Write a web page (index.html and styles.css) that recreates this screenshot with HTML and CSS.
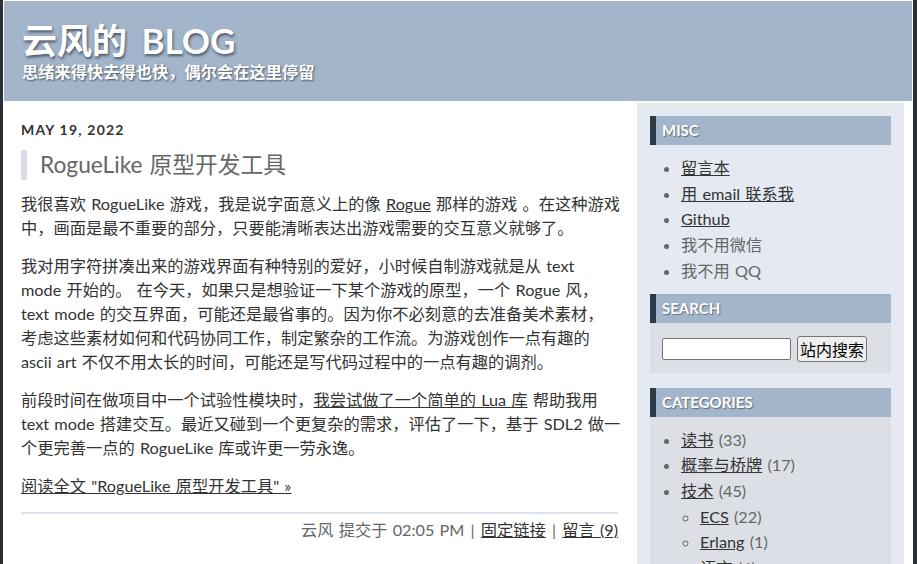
FILE: index.html
```html
<!DOCTYPE html>
<html lang="zh-CN">
<head>
<meta charset="utf-8">
<title>云风的 BLOG</title>
<link rel="stylesheet" href="styles.css">
</head>
<body>
<div class="wrapper">
  <header class="banner">
    <h1 class="site-title">云风的 BLOG</h1>
    <div class="site-desc">思绪来得快去得也快，偶尔会在这里停留</div>
  </header>
  <div class="columns">
    <main class="main">
      <h2 class="date">May 19, 2022</h2>
      <h3 class="entry-title">RogueLike 原型开发工具</h3>
      <div class="entry-body">
        <p>我很喜欢 RogueLike 游戏，我是说字面意义上的像 <a href="#">Rogue</a> 那样的游戏 。在这种游戏<br>中，画面是最不重要的部分，只要能清晰表达出游戏需要的交互意义就够了。</p>
        <p>我对用字符拼凑出来的游戏界面有种特别的爱好，小时候自制游戏就是从 text<br>mode 开始的。 在今天，如果只是想验证一下某个游戏的原型，一个 Rogue 风，<br>text mode 的交互界面，可能还是最省事的。因为你不必刻意的去准备美术素材，<br>考虑这些素材如何和代码协同工作，制定繁杂的工作流。为游戏创作一点有趣的<br>ascii art 不仅不用太长的时间，可能还是写代码过程中的一点有趣的调剂。</p>
        <p>前段时间在做项目中一个试验性模块时，<a href="#">我尝试做了一个简单的 Lua 库</a> 帮助我用<br>text mode 搭建交互。最近又碰到一个更复杂的需求，评估了一下，基于 SDL2 做一<br>个更完善一点的 RogueLike 库或许更一劳永逸。</p>
        <p><a href="#">阅读全文 "RogueLike 原型开发工具" »</a></p>
      </div>
      <div class="entry-footer">云风 提交于 02:05 PM <span class="sep">|</span> <a href="#">固定链接</a> <span class="sep">|</span> <a href="#">留言 (9)</a></div>
    </main>
    <aside class="sidebar">
      <section class="widget widget-misc">
        <h2 class="widget-title">Misc</h2>
        <ul class="widget-list">
          <li><a href="#">留言本</a></li>
          <li><a href="#">用 email 联系我</a></li>
          <li><a href="#">Github</a></li>
          <li>我不用微信</li>
          <li>我不用 QQ</li>
        </ul>
      </section>
      <section class="widget">
        <h2 class="widget-title">Search</h2>
        <form class="search-box">
          <input class="search-input" type="text">
          <button class="search-btn" type="button">站内搜索</button>
        </form>
      </section>
      <section class="widget">
        <h2 class="widget-title">Categories</h2>
        <ul class="widget-list boxed">
          <li><a href="#">读书</a> <span class="count">(33)</span></li>
          <li><a href="#">概率与桥牌</a> <span class="count">(17)</span></li>
          <li><a href="#">技术</a> <span class="count">(45)</span>
            <ul class="sub-list">
              <li><a href="#">ECS</a> <span class="count">(22)</span></li>
              <li><a href="#">Erlang</a> <span class="count">(1)</span></li>
              <li><a href="#">语言</a> <span class="count">(4)</span></li>
            </ul>
          </li>
        </ul>
      </section>
    </aside>
  </div>
</div>
</body>
</html>
```
FILE: styles.css
```css
html, body {
  margin: 0;
  padding: 0;
  background: #2b3036;
  height: 100%;
  overflow: hidden;
}
body {
  font-family: Lato, "Noto Sans CJK SC", sans-serif;
  font-size: 16.25px;
  color: #333;
}
a {
  color: #333;
  text-decoration: underline;
}
.wrapper {
  margin-left: 3px;
  width: 910px;
  background: #fff;
  padding-top: 1px;
  min-height: 100%;
}
.banner {
  margin: 0 1px;
  height: 100px;
  background: #a2b5cb;
  padding: 0 18px;
  box-sizing: border-box;
  overflow: hidden;
}
.site-title {
  margin: 0;
  padding-top: 18px;
  font-size: 35px;
  line-height: 42px;
  font-weight: bold;
  word-spacing: 6px;
  color: #fff;
  text-shadow: 1px 2px 3px #4a5563;
}
.site-desc {
  margin-top: 0;
  font-size: 16.25px;
  line-height: 22px;
  font-weight: bold;
  color: #fff;
  text-shadow: 1px 1px 2px #4a5563;
}
.columns {
  display: flex;
  align-items: flex-start;
  margin-top: 2px;
}
.main {
  width: 597px;
  padding: 0 19px 0 18px;
  word-spacing: 1px;
}
.date {
  margin: 17px 0 0;
  font-size: 14px;
  line-height: 20px;
  font-weight: bold;
  text-transform: uppercase;
  letter-spacing: 1.2px;
  word-spacing: 0;
  color: #333;
}
.entry-title {
  margin: 10px 0 0;
  border-left: 6px solid #d8dde6;
  padding-left: 13px;
  font-size: 22.75px;
  line-height: 30px;
  font-weight: normal;
  color: #666;
}
.entry-body {
  line-height: 24px;
  margin-top: 12px;
}
.entry-body p {
  margin: 0 -14px 14px 0;
}
.entry-footer {
  margin-top: 12px;
  border-top: 2px solid #dde3eb;
  padding-top: 4px;
  text-align: right;
  color: #666;
  line-height: 24px;
}
.sep {
  color: #666;
  padding: 0 1px;
}
.sidebar {
  width: 267px;
  background: #e5eaf2;
  padding: 13px 13px 0;
  box-sizing: border-box;
  min-height: 470px;
}
.widget {
  margin-bottom: 13px;
}
.widget-misc {
  margin-bottom: 10px;
}
.widget-title {
  margin: 0;
  height: 29px;
  line-height: 29px;
  border-left: 6px solid #2f3a48;
  background: #a2b5cb;
  padding-left: 6px;
  font-size: 15px;
  font-weight: bold;
  text-transform: uppercase;
  color: #fff;
  text-shadow: 1px 1px 1px #5e6b7a;
}
.widget-list {
  margin: 0;
  padding: 10px 0 0 31px;
  line-height: 25.7px;
  color: #666;
  word-spacing: 1px;
}
.widget-list li::marker {
  color: #666;
}
.widget-list.boxed {
  background: #dcdfe5;
  padding-bottom: 10px;
}
.sub-list {
  list-style: circle;
  margin: 0;
  padding-left: 19px;
}
.count {
  color: #666;
}
.search-box {
  display: flex;
  align-items: center;
  gap: 6px;
  background: #dcdfe5;
  padding: 13px 12px 12px;
  border-bottom: 1px solid #eef1f5;
}
.search-input {
  width: 129px;
  height: 22px;
  box-sizing: border-box;
  border: 1px solid #767676;
  border-radius: 2px;
  background: #fff;
  padding: 0 2px;
  margin: 0;
}
.search-btn {
  height: 26px;
  padding: 0 2px;
  margin: 0;
  font-family: "Noto Sans CJK SC", sans-serif;
  font-size: 16px;
  line-height: 22px;
  color: #000;
  background: #efefef;
  border: 1px solid #767676;
  border-radius: 3px;
}
```
